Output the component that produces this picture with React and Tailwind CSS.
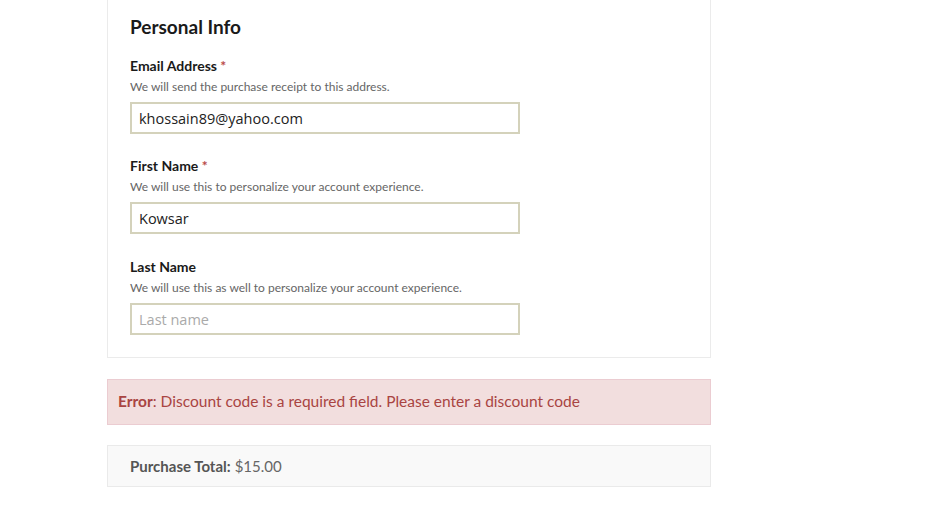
import React from 'react';

const labelFont = { fontFamily: 'Lato, "Noto Sans", sans-serif' };

const Field = ({ label, required, help, value, placeholder, gap }) => (
  <div className={gap}>
    <label className="block text-[14px] leading-[20px] font-bold text-[#1a1a1a]">
      {label}
      {required && <span className="text-[#b94a48]"> *</span>}
    </label>
    <p className="mt-[3px] text-[12px] leading-[16px] text-[#666]">{help}</p>
    <input
      readOnly
      defaultValue={value}
      placeholder={placeholder}
      className="mt-[7px] block w-[390px] h-[32px] border-2 border-[#d4d2bb] bg-white px-[7px] text-[14.5px] text-[#222] placeholder:text-[#aaa] outline-none font-['Open_Sans',sans-serif]"
    />
  </div>
);

export default function App() {
  return (
    <div className="min-h-[505px] w-[931px] bg-white" style={labelFont}>
      <div className="ml-[107px] w-[604px]">
        {/* Personal info card */}
        <div className="border border-t-0 border-[#ebebeb] px-[22px] pt-[14px] pb-[22px]">
          <h2 className="text-[19px] leading-[26px] font-bold text-[#1a1a1a]">Personal Info</h2>
          <Field
            gap="mt-[16px]"
            label="Email Address"
            required
            help="We will send the purchase receipt to this address."
            value="khossain89@yahoo.com"
          />
          <Field
            gap="mt-[22px]"
            label="First Name"
            required
            help="We will use this to personalize your account experience."
            value="Kowsar"
          />
          <Field
            gap="mt-[23px]"
            label="Last Name"
            help="We will use this as well to personalize your account experience."
            placeholder="Last name"
          />
        </div>

        {/* Error */}
        <div className="mt-[21px] h-[46px] flex items-center border border-[#ebccd1] bg-[#f2dede] px-[10px] text-[15.5px] text-[#a94442]">
          <span><strong>Error</strong>: Discount code is a required field. Please enter a discount code</span>
        </div>

        {/* Total */}
        <div className="mt-[20px] h-[42px] flex items-center border border-[#eaeaea] bg-[#f9f9f9] px-[22px] text-[15px] text-[#666]">
          <strong className="text-[#555] mr-[4px]">Purchase Total:</strong>$15.00
        </div>
      </div>
    </div>
  );
}
